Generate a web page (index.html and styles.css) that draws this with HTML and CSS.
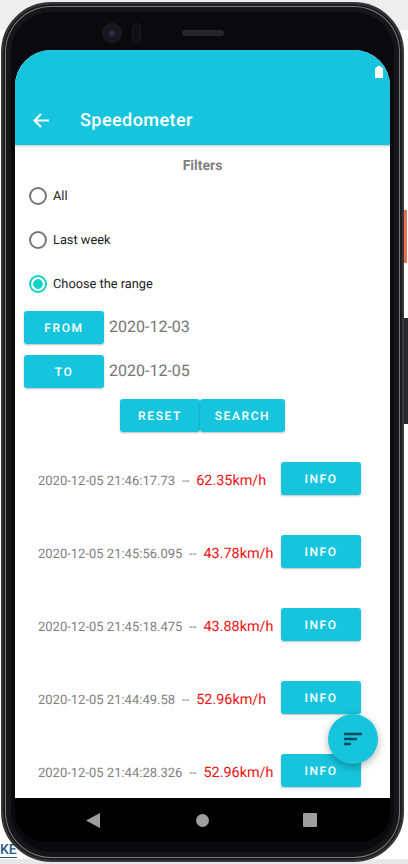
FILE: index.html
```html
<!DOCTYPE html>
<html lang="en">

<head>
    <meta charset="UTF-8">
    <meta name="viewport" content="width=device-width, initial-scale=1.0">
    <title>Speedometer</title>
    <link rel="stylesheet" href="styles.css">
</head>

<body>
    <div class="behind-top"></div>
    <div class="behind-bottom"></div>
    <span class="behind-text">KE</span>

    <div class="phone">
        <div class="side-power"></div>
        <div class="side-volume"></div>

        <div class="bezel-top">
            <div class="camera"></div>
            <div class="sensor"></div>
            <div class="speaker"></div>
        </div>

        <div class="screen">
            <header class="app-header">
                <div class="status-bar">
                    <svg class="battery" width="8" height="12" viewBox="0 0 8 12">
                        <path d="M3 0h2l1 1q2 .3 2 2V12H0V3Q0 1.300 2 1z" fill="#fff" />
                    </svg>
                </div>
                <div class="toolbar">
                    <svg class="back" width="16" height="15" viewBox="0 0 16 15">
                        <path d="M16 7.500H2M8 1L1.500 7.500 8 14" fill="none" stroke="#fff" stroke-width="2" />
                    </svg>
                    <h1>Speedometer</h1>
                </div>
            </header>

            <main class="content">
                <h2 class="filters-title">Filters</h2>

                <div class="radio-group">
                    <div class="radio-row"><span class="radio"></span><span class="radio-label">All</span></div>
                    <div class="radio-row"><span class="radio"></span><span class="radio-label">Last week</span></div>
                    <div class="radio-row"><span class="radio radio-on"></span><span class="radio-label">Choose the range</span></div>
                </div>

                <div class="date-row">
                    <button class="btn btn-wide">FROM</button>
                    <span class="date-value">2020-12-03</span>
                </div>
                <div class="date-row">
                    <button class="btn btn-wide">TO</button>
                    <span class="date-value">2020-12-05</span>
                </div>

                <div class="action-row">
                    <button class="btn btn-wide">RESET</button>
                    <button class="btn btn-search">SEARCH</button>
                </div>

                <div class="result-list">
                    <div class="result">
                        <div class="result-text"><span class="stamp">2020-12-05 21:46:17.73</span><span class="sep">--</span><span class="speed">62.35km/h</span></div>
                        <button class="btn btn-wide">INFO</button>
                    </div>
                    <div class="result">
                        <div class="result-text"><span class="stamp">2020-12-05 21:45:56.095</span><span class="sep">--</span><span class="speed">43.78km/h</span></div>
                        <button class="btn btn-wide">INFO</button>
                    </div>
                    <div class="result">
                        <div class="result-text"><span class="stamp">2020-12-05 21:45:18.475</span><span class="sep">--</span><span class="speed">43.88km/h</span></div>
                        <button class="btn btn-wide">INFO</button>
                    </div>
                    <div class="result">
                        <div class="result-text"><span class="stamp">2020-12-05 21:44:49.58</span><span class="sep">--</span><span class="speed">52.96km/h</span></div>
                        <button class="btn btn-wide">INFO</button>
                    </div>
                    <div class="result">
                        <div class="result-text"><span class="stamp">2020-12-05 21:44:28.326</span><span class="sep">--</span><span class="speed">52.96km/h</span></div>
                        <button class="btn btn-wide">INFO</button>
                    </div>
                </div>
            </main>

            <button class="fab">
                <svg width="20" height="14" viewBox="0 0 20 14">
                    <path d="M1 2h18M1 7h13M1 12h7" fill="none" stroke="#064b5a" stroke-width="2.400" />
                </svg>
            </button>
        </div>

        <nav class="nav-bar">
            <svg width="14" height="15" viewBox="0 0 14 15"><path d="M14 0v15L0 7.500z" fill="#9e9e9e" /></svg>
            <span class="nav-circle"></span>
            <span class="nav-square"></span>
        </nav>
    </div>
</body>

</html>
```

FILE: styles.css
```css
* {
    box-sizing: border-box;
    text-rendering: geometricPrecision;
}

body {
    margin: 0;
    width: 408px;
    height: 864px;
    overflow: hidden;
    position: relative;
    background-color: #fff;
    font-family: Roboto, sans-serif;
}

.behind-top {
    position: absolute;
    top: 0;
    left: 0;
    width: 408px;
    height: 30px;
    background-color: #eeeeee;
}

.behind-bottom {
    position: absolute;
    bottom: 0;
    left: 0;
    width: 408px;
    height: 5px;
    background-color: #e8e8e8;
}

.behind-text {
    position: absolute;
    left: 0;
    top: 843px;
    font-size: 14px;
    font-weight: 500;
    color: #1f5a8c;
    border-bottom: 1px solid #1f5a8c;
    line-height: 14px;
}

.phone {
    position: absolute;
    left: 1px;
    top: 2px;
    width: 403px;
    height: 860px;
    padding: 0 12px;
    background-color: #0a0a0c;
    border: 2px solid #38383a;
    border-radius: 50px;
    box-shadow: inset 0 0 0 2px #1c1c1e, inset 0 0 0 3px #777, inset 0 0 0 8px #161618;
    display: flex;
    flex-direction: column;
}

.side-power {
    position: absolute;
    right: -5px;
    top: 206px;
    width: 3px;
    height: 53px;
    background-color: #e8734f;
}

.side-volume {
    position: absolute;
    right: -6px;
    top: 314px;
    width: 4px;
    height: 106px;
    background-color: #2b2b2d;
}

.bezel-top {
    height: 46px;
    flex-shrink: 0;
    position: relative;
}

.camera {
    position: absolute;
    left: 87px;
    top: 19px;
    width: 20px;
    height: 20px;
    border-radius: 50%;
    background: radial-gradient(circle, #2c3c66 0, #15151a 35%, #1d1d20 70%, #101012 100%);
}

.sensor {
    position: absolute;
    left: 117px;
    top: 19px;
    width: 9px;
    height: 20px;
    border-radius: 5px;
    background-color: #101012;
    border: 1px solid #1c1c1f;
}

.speaker {
    position: absolute;
    left: 167px;
    top: 26px;
    width: 42px;
    height: 6px;
    border-radius: 3px;
    background-color: #26262a;
}

.screen {
    height: 748px;
    flex-shrink: 0;
    position: relative;
    overflow: hidden;
    background-color: #fff;
    border-radius: 36px 36px 0 0;
}

.app-header {
    height: 95px;
    background-color: #16c5dd;
    box-shadow: 0 1px 2px rgba(0, 0, 0, 0.25);
    position: relative;
}

.status-bar {
    height: 46px;
    display: flex;
    justify-content: flex-end;
    padding: 16px 7px 0 0;
}

.battery {
    display: block;
}

.toolbar {
    height: 49px;
    display: flex;
    align-items: center;
    padding: 0 0 1px 18px;
    gap: 31px;
}

.toolbar h1 {
    margin: 0;
    color: #fff;
    font-size: 18px;
    font-weight: 500;
    letter-spacing: 0.45px;
}

.content {
    display: flex;
    flex-direction: column;
}

.filters-title {
    margin: 13px 0 0;
    text-align: center;
    font-size: 14px;
    line-height: 16px;
    font-weight: 700;
    color: #808080;
}

.radio-group {
    margin-bottom: 5px;
}

.radio-row {
    height: 44px;
    display: flex;
    align-items: center;
    gap: 6px;
    padding-left: 14px;
    font-size: 12.800px;
    color: #1c1c1c;
}

.radio-label {
    padding-top: 1px;
}

.radio {
    width: 18px;
    height: 18px;
    border: 2px solid #757575;
    border-radius: 50%;
}

.radio-on {
    border-color: #0fd3c3;
    background: radial-gradient(circle, #0fd3c3 0, #0fd3c3 4.500px, #fff 5px);
}

.date-row {
    display: flex;
    align-items: center;
    gap: 5px;
    padding-left: 9px;
    margin-bottom: 11px;
}

.date-value {
    font-size: 16px;
    color: #757575;
    padding-bottom: 2px;
}

.btn {
    height: 33px;
    padding: 0;
    border: none;
    border-radius: 3px;
    background-color: #16c5dd;
    color: #fff;
    font-family: Roboto, sans-serif;
    font-size: 12px;
    font-weight: 500;
    letter-spacing: 1.6px;
    box-shadow: 0 1px 2px rgba(0, 0, 0, 0.25);
}

.btn-wide {
    width: 80px;
}

.btn-search {
    width: 85px;
}

.action-row {
    display: flex;
    padding-left: 105px;
}

.result-list {
    margin-top: 30px;
    display: flex;
    flex-direction: column;
    gap: 40px;
    padding: 0 29px 0 23px;
}

.result {
    display: flex;
    align-items: center;
    justify-content: space-between;
    flex-shrink: 0;
}

.result-text {
    display: flex;
    align-items: baseline;
    padding-top: 3px;
}

.stamp {
    font-size: 13px;
    color: #808080;
}

.sep {
    font-size: 13px;
    color: #808080;
    margin: 0 7px;
}

.speed {
    font-size: 14.400px;
    color: #f01010;
}

.fab {
    position: absolute;
    left: 313px;
    top: 664px;
    width: 50px;
    height: 50px;
    padding: 0;
    border: none;
    border-radius: 50%;
    background-color: #16c5dd;
    box-shadow: 0 3px 8px rgba(0, 0, 0, 0.3);
    display: flex;
    align-items: center;
    justify-content: center;
}

.nav-bar {
    height: 44px;
    flex-shrink: 0;
    background-color: #000;
    display: flex;
    align-items: center;
    border-radius: 0 0 30px 30px;
    padding-left: 71px;
}

.nav-circle {
    width: 13px;
    height: 13px;
    margin-left: 96px;
    border-radius: 50%;
    background-color: #9e9e9e;
}

.nav-square {
    width: 14px;
    height: 14px;
    margin-left: 94px;
    border-radius: 1px;
    background-color: #9e9e9e;
}
```
